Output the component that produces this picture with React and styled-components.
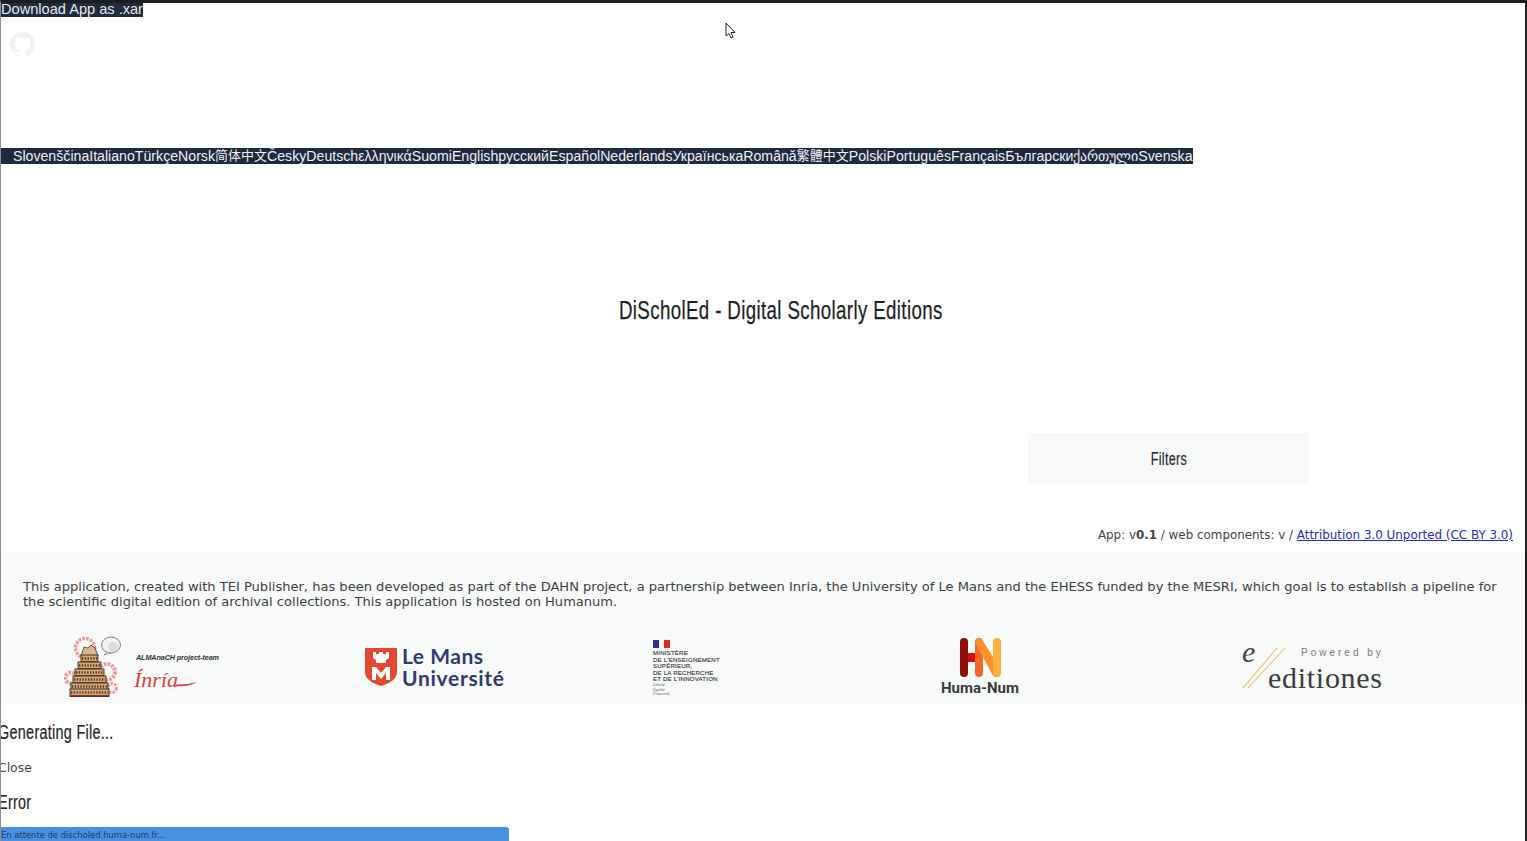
import React from 'react';
import styled, { createGlobalStyle } from 'styled-components';

const GlobalStyle = createGlobalStyle`
  html, body {
    margin: 0;
    padding: 0;
    height: 100%;
    overflow: hidden;
    background: #fff;
  }
`;

const headingFont = `"Liberation Sans", sans-serif`;
const bodyFont = `"DejaVu Sans", Verdana, sans-serif`;
const uiFont = `"Liberation Sans", "Noto Sans CJK SC", sans-serif`;

const Screen = styled.div`
  position: relative;
  width: 1527px;
  height: 841px;
  box-sizing: border-box;
  overflow: hidden;
  background: #fff;
  border-top: 3px solid #1d1d20;
  border-left: 1px solid #8e8e8e;
  border-right: 2px solid #1d1d20;
`;

const DownloadLink = styled.a`
  display: block;
  width: fit-content;
  height: 14px;
  background: #1f2a3d;
  color: #e6e8ec;
  font: 14.6px/13px ${uiFont};
  white-space: nowrap;
`;

const GithubRow = styled.div`
  height: 131px;
  padding: 15px 0 0 9px;
  box-sizing: border-box;
  color: #f0f1f1;
`;

const LangBar = styled.nav`
  display: flex;
  width: fit-content;
  height: 16px;
  padding-left: 12px;
  background: #1f2a3d;
  color: #eef0f3;
  font: 14.15px/16px ${uiFont};
  white-space: nowrap;
`;

const LangItem = styled.span`
  font-size: ${(p) => (p.$cjk ? '13px' : 'inherit')};
`;

// no Oswald here, so the headings are squeezed sideways to get its proportions
const Title = styled.h1`
  margin: 0;
  color: #1d1f24;
  font: 400 26px/34px ${headingFont};
  letter-spacing: 0.5px;
  -webkit-text-stroke: 0.25px #1d1f24;
  transform: scaleX(0.72);
`;

const TitleRow = styled.div`
  display: flex;
  justify-content: center;
  height: 269px;
  padding: 129px 0 0 35px;
  box-sizing: border-box;
`;

const FilterRow = styled.div`
  display: flex;
  justify-content: flex-end;
  padding-right: 216px;
`;

const FilterBox = styled.div`
  display: flex;
  align-items: center;
  justify-content: center;
  width: 281px;
  height: 51px;
  background: #f7f8f8;
`;

const FilterLabel = styled.span`
  color: #2b2d33;
  font: 400 18px/22px ${headingFont};
  letter-spacing: 0.4px;
  -webkit-text-stroke: 0.2px #2b2d33;
  transform: scaleX(0.7);
`;

const VersionLine = styled.div`
  height: 68px;
  padding: 44px 12px 0 0;
  box-sizing: border-box;
  text-align: right;
  color: #444;
  font: 11.9px/15px ${bodyFont};

  a {
    color: #2a2ac0;
    text-decoration: underline;
  }
`;

const Footer = styled.footer`
  height: 152px;
  background: #f8f9f9;
  box-sizing: border-box;
  padding-top: 27px;
`;

const Blurb = styled.p`
  margin: 0;
  padding: 0 22px;
  color: #3d3f44;
  font: 13.06px/15px ${bodyFont};
`;

const LogoRow = styled.div`
  display: flex;
  align-items: flex-start;
  margin-top: 25px;
  padding-left: 63px;
`;

const Logo = styled.svg`
  display: block;
  flex: none;
  height: 64px;
  margin-left: ${(p) => p.$gap || 0}px;
`;

const Notices = styled.section`
  margin-left: -3px;
`;

const DialogHeading = styled.h2`
  margin: 0;
  padding-top: ${(p) => p.$top}px;
  color: #22242a;
  font: 400 20px/28px ${headingFont};
  letter-spacing: 0.4px;
  -webkit-text-stroke: 0.2px #22242a;
  transform: scaleX(0.72);
  transform-origin: left center;
`;

const CloseText = styled.div`
  height: 42px;
  padding-top: 14px;
  box-sizing: border-box;
  color: #444;
  font: 12.4px/15px ${bodyFont};
`;

const StatusBar = styled.div`
  position: absolute;
  left: 0;
  bottom: 0;
  width: 508px;
  height: 14px;
  box-sizing: border-box;
  border-top-right-radius: 3px;
  background: #4a90e2;
  color: #1f3557;
  font: 8.4px/17px ${bodyFont};
`;

const Pointer = styled.svg`
  position: absolute;
  left: 723px;
  top: 19px;
`;

const languages = [
  'Slovenščina', 'Italiano', 'Türkçe', 'Norsk', '简体中文', 'Česky', 'Deutsch', 'ελληνικά',
  'Suomi', 'English', 'русский', 'Español', 'Nederlands', 'Українська', 'Română', '繁體中文',
  'Polski', 'Português', 'Français', 'Български', 'ქართული', 'Svenska',
];

const GithubMark = () => (
  <svg width="25" height="25" viewBox="0 0 16 16" fill="currentColor">
    <path d="M8 0C3.58 0 0 3.58 0 8c0 3.54 2.29 6.53 5.47 7.59.4.07.55-.17.55-.38 0-.19-.01-.82-.01-1.49-2.01.37-2.53-.49-2.69-.94-.09-.23-.48-.94-.82-1.13-.28-.15-.68-.52-.01-.53.63-.01 1.08.58 1.23.82.72 1.21 1.87.87 2.33.66.07-.52.28-.87.51-1.07-1.78-.2-3.64-.89-3.64-3.95 0-.87.31-1.59.82-2.15-.08-.2-.36-1.02.08-2.12 0 0 .67-.21 2.2.82.64-.18 1.32-.27 2-.27s1.36.09 2 .27c1.53-1.04 2.2-.82 2.2-.82.44 1.1.16 1.92.08 2.12.51.56.82 1.27.82 2.15 0 3.07-1.87 3.75-3.65 3.95.29.25.54.73.54 1.48 0 1.07-.01 1.93-.01 2.2 0 .21.15.46.55.38A8.01 8.01 0 0 0 16 8c0-4.42-3.58-8-8-8z" />
  </svg>
);

// the tower floors, top to bottom: left edge, top y, width
const towerRows = [
  [17, 21, 17], [14, 28, 23], [11, 35, 29], [9, 42, 33], [7, 49, 37], [6, 55, 39],
];

const Gear = ({ x, y, r, w }) => (
  <circle cx={x} cy={y} r={r} fill="none" stroke="#e89a98" strokeWidth={w} strokeDasharray="2.6 1.2" />
);

const InriaLogo = () => (
  <Logo width="157" viewBox="0 0 157 64">
    <Gear x={21} y={14} r={9.5} w={3.5} />
    <Gear x={7} y={44} r={5.5} w={4} />
    <Gear x={43} y={38} r={8} w={4} />
    <Gear x={48} y={54} r={4.5} w={3} />
    <path d="M20 13 L24 14 L27 11 L31 14 L34 22 L17 22 Z" fill="#d9b98c" stroke="#3f3022" strokeWidth="0.8" />
    {towerRows.map(([x, y, w]) => (
      <g key={y}>
        <rect x={x} y={y} width={w} height="7.5" fill="#d3ab78" stroke="#33261a" strokeWidth="0.9" />
        <rect x={x} y={y + 6} width={w} height="1.2" fill="#9c2d25" />
        <line x1={x + 1} y1={y + 3.5} x2={x + w - 1} y2={y + 3.5} stroke="#4a3826" strokeWidth="2.6" strokeDasharray="1.3 1.5" />
      </g>
    ))}
    <ellipse cx="47" cy="11" rx="9.5" ry="8" fill="#f1f2f2" stroke="#666" strokeWidth="0.8" />
    <circle cx="49" cy="13" r="5" fill="#dcdcdc" />
    <path d="M43 18 L40 21 L47 19 Z" fill="#f1f2f2" stroke="#666" strokeWidth="0.6" />
    <text x="72" y="25.5" fontFamily="Liberation Sans" fontSize="7.2" fontStyle="italic" fontWeight="700" fill="#333" textLength="83">ALMAnaCH project-team</text>
    <text x="70" y="53" fontFamily="Liberation Serif" fontSize="22" fontStyle="italic" fill="#d4423c" textLength="44">Ínría</text>
    <path d="M112 50.5 Q122 51 133 48 Q126 53 112 52 Z" fill="#d4423c" />
  </Logo>
);

const LeMansLogo = () => (
  <Logo width="141" viewBox="0 0 141 64" $gap={143}>
    <path d="M1 14 H33 V38 Q33 47 17 52 Q1 47 1 38 Z" fill="#e2492f" />
    <path d="M9 18 H12 V20 H15 V18 H19 V20 H22 V18 H25 V24 L22 26 V29 H12 V26 L9 24 Z" fill="#fff" />
    <path d="M8 33 H12 L17 39 L22 33 H26 V46 H22 V39 L17 45 L12 39 V46 H8 Z" fill="#fff" />
    <text x="38" y="30" fontFamily="Lato, Inter, sans-serif" fontSize="21" fontWeight="700" fill="#2f3a72" textLength="81">Le Mans</text>
    <text x="38" y="52" fontFamily="Lato, Inter, sans-serif" fontSize="21" fontWeight="700" fill="#2f3a72" textLength="102">Université</text>
  </Logo>
);

const ministryLines = ['MINISTÈRE', "DE L'ENSEIGNEMENT", 'SUPÉRIEUR,', 'DE LA RECHERCHE', "ET DE L'INNOVATION"];

const MinistryLogo = () => (
  <Logo width="69" viewBox="0 0 69 64" $gap={147}>
    <rect x="1" y="6" width="6" height="8" fill="#2b2f8f" />
    <rect x="7" y="6" width="5" height="8" fill="#f4f4f4" />
    <rect x="12" y="6" width="6" height="8" fill="#dd2a25" />
    {ministryLines.map((line, i) => (
      <text key={line} x="1" y={21 + i * 6.6} fontFamily="Liberation Sans" fontSize="6.1" letterSpacing="0.2" stroke="#3a3a3a" strokeWidth="0.15" fill="#3a3a3a">{line}</text>
    ))}
    {['Liberté', 'Égalité', 'Fraternité'].map((line, i) => (
      <text key={line} x="1" y={52 + i * 4.5} fontFamily="Liberation Serif" fontSize="4" fontStyle="italic" fill="#555">{line}</text>
    ))}
  </Logo>
);

const HumaNumLogo = () => (
  <Logo width="81" viewBox="0 0 81 64" $gap={219}>
    <rect x="20" y="4" width="8" height="39" rx="4" fill="#8f0d0d" />
    <rect x="28" y="19" width="8" height="9" fill="#d40d0d" />
    <rect x="35" y="4" width="8" height="39" rx="4" fill="#f2672a" />
    <path d="M35 8 Q39 2 43 7 L61 36 L57 43 Q54 44 52 40 Z" fill="#f7922c" />
    <rect x="53" y="4" width="8" height="39" rx="4" fill="#fdb03c" />
    <text x="1" y="58.5" fontFamily="Roboto, Liberation Sans, sans-serif" fontSize="15" fontWeight="700" fill="#3a3a3c" textLength="78">Huma-Num</text>
  </Logo>
);

const EditionesLogo = () => (
  <Logo width="141" viewBox="0 0 141 64" $gap={221}>
    <text x="0" y="28" fontFamily="Liberation Serif" fontSize="30" fontStyle="italic" fill="#444">e</text>
    <path d="M1 54 L35 14 M6 54 L43 14" stroke="#eea945" strokeWidth="1" fill="none" />
    <text x="59" y="22" fontFamily="Liberation Sans" fontSize="10" letterSpacing="3" fill="#777">Powered by</text>
    <text x="26" y="54" fontFamily="Liberation Serif" fontSize="30" fill="#3c3c3c" textLength="114">editiones</text>
  </Logo>
);

export default function App() {
  return (
    <>
      <GlobalStyle />
      <Screen>
        <DownloadLink>Download App as .xar</DownloadLink>
        <GithubRow>
          <GithubMark />
        </GithubRow>
        <LangBar>
          {languages.map((lang) => (
            <LangItem key={lang} $cjk={lang.endsWith('中文')}>{lang}</LangItem>
          ))}
        </LangBar>
        <TitleRow>
          <Title>DiScholEd - Digital Scholarly Editions</Title>
        </TitleRow>
        <FilterRow>
          <FilterBox>
            <FilterLabel>Filters</FilterLabel>
          </FilterBox>
        </FilterRow>
        <VersionLine>
          App: v<b>0.1</b> / web components: v / <a href="#license">Attribution 3.0 Unported (CC BY 3.0)</a>
        </VersionLine>
        <Footer>
          <Blurb>
            This application, created with TEI Publisher, has been developed as part of the DAHN project, a partnership between Inria, the University of Le Mans and the EHESS funded by the MESRI, which goal is to establish a pipeline for the scientific digital edition of archival collections. This application is hosted on Humanum.
          </Blurb>
          <LogoRow>
            <InriaLogo />
            <LeMansLogo />
            <MinistryLogo />
            <HumaNumLogo />
            <EditionesLogo />
          </LogoRow>
        </Footer>
        <Notices>
          <DialogHeading $top={14}>Generating File...</DialogHeading>
          <CloseText>Close</CloseText>
          <DialogHeading $top={0}>Error</DialogHeading>
        </Notices>
        <StatusBar>En attente de discholed.huma-num.fr...</StatusBar>
        <Pointer width="12" height="18" viewBox="0 0 12 18">
          <path d="M2 1 L2 14 L5 11.5 L7 16 L9 15 L7 10.5 L11 10.5 Z" fill="#fff" stroke="#222" strokeWidth="1" />
        </Pointer>
      </Screen>
    </>
  );
}
